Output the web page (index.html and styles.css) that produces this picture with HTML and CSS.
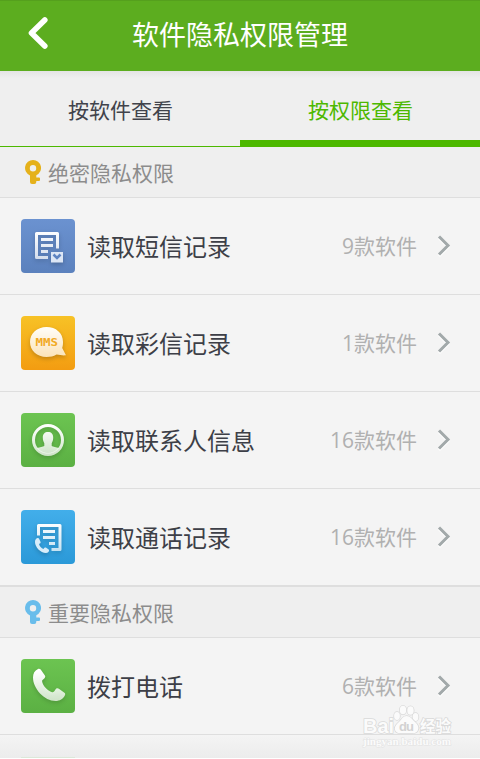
FILE: index.html
```
<!DOCTYPE html>
<html lang="zh-CN">
<head>
<meta charset="utf-8">
<title>软件隐私权限管理</title>
<link rel="stylesheet" href="styles.css">
</head>
<body>
<svg class="defs" width="0" height="0">
  <defs>
    <linearGradient id="white" x1="0" y1="12" x2="0" y2="42" gradientUnits="userSpaceOnUse"><stop stop-color="#fff"/><stop offset="1" stop-color="#fff" stop-opacity=".72"/></linearGradient>
    <linearGradient id="cream" x1="0" y1="0" x2="0" y2="1"><stop stop-color="#fffefa"/><stop offset="1" stop-color="#fbe3b8"/></linearGradient>
    <symbol id="key" viewBox="0 0 16 24"><path fill="currentColor" fill-rule="evenodd" d="M8 0a8 8 0 0 1 3.300 15.300V17.500H14a1 1 0 0 1 1 1V20a1 1 0 0 1-1 1h-2.700V22a2 2 0 0 1-2 2H7a2 2 0 0 1-2-2V15.400A8 8 0 0 1 8 0zM8 5a3.200 3.200 0 1 0 0 6.400A3.200 3.200 0 0 0 8 5z"/></symbol>
    <symbol id="arrow" viewBox="0 0 14 22"><path d="M2 3l9 9-9 9" fill="none" stroke="#fff" stroke-width="2.800"/><path d="M2 1.500l9 9-9 9" fill="none" stroke="#a2a9aa" stroke-width="3"/></symbol>
  </defs>
</svg>
<div class="screen">
  <header class="header">
    <svg class="back" width="24" height="36" viewBox="0 0 24 36"><path d="M18.800 4L5.500 17l13.300 13" fill="none" stroke="#fff" stroke-width="5.600" stroke-linecap="round" stroke-linejoin="round"/></svg>
    <h1 class="title">软件隐私权限管理</h1>
  </header>
  <nav class="tabs">
    <div class="tab">按软件查看</div>
    <div class="tab active">按权限查看</div>
  </nav>
  <section>
    <h2 class="group"><svg class="key gold" width="16" height="24"><use href="#key"/></svg><span class="label">绝密隐私权限</span></h2>
    <div class="row">
      <svg class="icon blue" width="54" height="54" viewBox="0 0 54 54">
        <g class="glyph"><path fill="none" stroke="url(#white)" stroke-width="3" stroke-linejoin="round" d="M36.500 29.500V14.500h-21v24H27"/><path fill="none" stroke="url(#white)" stroke-width="3" d="M20 20.500h12M20 26.500h12M20 32.500h7"/><path fill="#dce6f5" d="M30 33h12v10.500H30z"/></g>
        <path d="M32.500 35.500l3.500 3.500 3.500-3.500" fill="none" stroke="#5e84c2" stroke-width="2.600"/>
      </svg>
      <span class="name">读取短信记录</span><span class="count">9款软件</span><svg class="arrow" width="14" height="22"><use href="#arrow"/></svg>
    </div>
    <div class="row">
      <svg class="icon amber" width="54" height="54" viewBox="0 0 54 54">
        <path class="glyph" fill="url(#cream)" d="M25.500 11C35 11 42 17 42 26c0 3-.3 4.500-.8 6l3.800 7.300c-3.500.4-6-.3-9.500-.8C32.500 40.300 29.500 41 25.500 41 16 41 9 34.500 9 26S16 11 25.500 11z"/>
        <text class="mms" x="14.500" y="30.300" textLength="22.500" lengthAdjust="spacingAndGlyphs">MMS</text>
      </svg>
      <span class="name">读取彩信记录</span><span class="count">1款软件</span><svg class="arrow" width="14" height="22"><use href="#arrow"/></svg>
    </div>
    <div class="row">
      <svg class="icon green" width="54" height="54" viewBox="0 0 54 54">
        <g class="glyph"><circle cx="27" cy="27" r="14.500" fill="none" stroke="url(#white)" stroke-width="3"/><path fill="url(#white)" d="M27 19c3.300 0 5.200 2 5.200 5.500 0 3-.7 4-1.500 5.800v2.600c1.300 1 4.500 1.200 7.300 2.100C35 39 31.500 40.500 27 40.500S19 39 16 35c2.800-.9 6-1.100 7.300-2.100v-2.600c-.8-1.800-1.500-2.800-1.500-5.800C21.800 21 23.700 19 27 19z"/></g>
      </svg>
      <span class="name">读取联系人信息</span><span class="count">16款软件</span><svg class="arrow" width="14" height="22"><use href="#arrow"/></svg>
    </div>
    <div class="row">
      <svg class="icon sky" width="54" height="54" viewBox="0 0 54 54">
        <g class="glyph"><path fill="none" stroke="url(#white)" stroke-width="3" stroke-linejoin="round" d="M17.500 25.500v-10h21.500v24H30.500"/><path fill="none" stroke="url(#white)" stroke-width="3" d="M22 21.500h12M22 27.500h12M28 33.500h6"/><path fill="#d8edfa" d="M16.500 28c-1.600.5-2.500 2-2.500 4 0 5 5.500 11 11 11 1.500 0 2.600-.7 3-2 .2-.8 0-1.300-.6-1.700l-2.600-1.700c-.8-.4-1.500 0-2.300 1.300-1.900-.5-4.200-3.200-4.500-5 1.300-.5 1.900-1.100 1.600-2l-1.400-3c-.3-.7-.9-1.100-1.700-.9z"/></g>
      </svg>
      <span class="name">读取通话记录</span><span class="count">16款软件</span><svg class="arrow" width="14" height="22"><use href="#arrow"/></svg>
    </div>
  </section>
  <section>
    <h2 class="group second"><svg class="key azure" width="16" height="24"><use href="#key"/></svg><span class="label">重要隐私权限</span></h2>
    <div class="row">
      <svg class="icon green" width="54" height="54" viewBox="0 0 54 54">
        <path class="glyph" fill="url(#white)" d="M17 10c1-.5 2-.2 2.700.6l4.200 6c.6 1 .4 1.700-.4 2.600-1 1.100-2.500 1.600-2.400 3 .3 4 5.500 9.800 10 11 1.500.4 2.200-1 3.200-2.500 1-1.600 2.300-1.900 3.600-1l5.500 4c1 .8 1 1.700.4 2.800-1.600 3.300-5 5.500-9.300 5.500C23.500 42 11.900 29.500 12 18.500c0-4 1.600-7 5-8.500z"/>
      </svg>
      <span class="name">拨打电话</span><span class="count">6款软件</span><svg class="arrow" width="14" height="22"><use href="#arrow"/></svg>
    </div>
    <div class="next"><div class="next-icon"></div></div>
  </section>
  <svg class="watermark" width="96" height="46" viewBox="0 0 96 46">
    <text class="mark bai" x="2" y="29" textLength="31" lengthAdjust="spacingAndGlyphs">Bai</text>
    <g class="paw"><ellipse cx="36" cy="12" rx="2.900" ry="4"/><ellipse cx="42" cy="6" rx="3.200" ry="4.300"/><ellipse cx="49.500" cy="6.500" rx="3.200" ry="4.300"/><ellipse cx="54.500" cy="13" rx="2.900" ry="4"/><path d="M45.500 12c4 0 5.500 3.500 8.500 6s4.500 6 2.500 9-6 2.300-11 2.300-9 .7-11-2.300.5-6.500 3.500-9 3.500-6 7.500-6z"/></g>
    <text class="du" x="38" y="26.500" textLength="15">du</text>
    <text class="mark exp" x="59" y="27.500" textLength="31">经验</text>
    <text class="mark url" x="2" y="41" textLength="88" lengthAdjust="spacingAndGlyphs">jingyan.baidu.com</text>
  </svg>
</div>
</body>
</html>
```
FILE: styles.css
```
* { box-sizing: border-box; }
body { margin: 0; background: #fff; font-family: "Open Sans", "Noto Sans CJK SC", sans-serif; }
h1, h2 { margin: 0; font-weight: 400; }
.defs { position: absolute; }
.screen { position: relative; width: 480px; height: 758px; overflow: hidden; background: #f4f4f4; }

.header { display: flex; align-items: center; justify-content: center; height: 71px; padding-bottom: 3px; background: #5cad1f; border-top: 1px solid #55a01d; }
.back { position: absolute; left: 26px; top: 16px; }
.title { font-size: 27px; line-height: 40px; color: #fff; }

.tabs { display: flex; height: 76px; background: linear-gradient(#e4e4e4, #efefef 7px); }
.tab { flex: 1; height: 76px; padding-left: 1px; line-height: 79px; text-align: center; font-size: 21px; color: #41434b; border-bottom: 1px solid #4db800; }
.tab.active { color: #4db800; border-bottom-width: 7px; }

.group { display: flex; align-items: center; height: 51px; padding-left: 25px; background: #efefef; border-bottom: 1px solid #dedede; font-size: 21px; line-height: 30px; color: #8c8c8c; }
.group.second { height: 52px; border-top: 1px solid #dedede; }
.label { padding-top: 2px; }
.key { margin-right: 7px; }
.gold { color: #e5b11b; }
.azure { color: #69bdeb; }

.row { display: flex; align-items: center; height: 97px; padding: 0 29px 0 21px; border-bottom: 1px solid #dedede; }
.icon { flex: none; border-radius: 4px; }
.blue { background: linear-gradient(#6b92d0, #5b81bd); }
.amber { background: linear-gradient(#f7c226, #f39c11); }
.green { background: linear-gradient(#6cc451, #5bb043); }
.sky { background: linear-gradient(#42aeea, #2b99d8); }
.glyph { filter: drop-shadow(0 2px 2px rgba(0, 0, 0, .2)); }
.mms { font: bold 10.5px "DejaVu Sans Mono", monospace; fill: #f1aa25; }
.name { flex: 1; margin-left: 12px; padding-top: 1px; font-size: 24px; line-height: 36px; color: #3d3f47; }
.count { font-size: 21px; line-height: 30px; color: #b0b0b0; }
.arrow { margin-left: 20px; }

.next { height: 23px; padding: 22px 0 0 21px; background: linear-gradient(#f4f4f4, #ececec); }
.next-icon { width: 54px; height: 1px; background: #dce8d9; }

.watermark { position: absolute; left: 361px; top: 704px; }
.mark, .paw { fill: #fbfbfb; stroke: #d9d9d9; stroke-width: 1.5; paint-order: stroke; font-family: "Liberation Sans", "Noto Sans CJK SC", sans-serif; font-weight: 700; }
.bai { font-size: 20px; }
.exp { font-size: 15.5px; }
.url { font-family: "Liberation Serif", serif; font-size: 11px; stroke: #e2e2e2; stroke-width: 1; }
.du { font: bold 13px "Liberation Sans", sans-serif; fill: #d2d2d2; }
```
